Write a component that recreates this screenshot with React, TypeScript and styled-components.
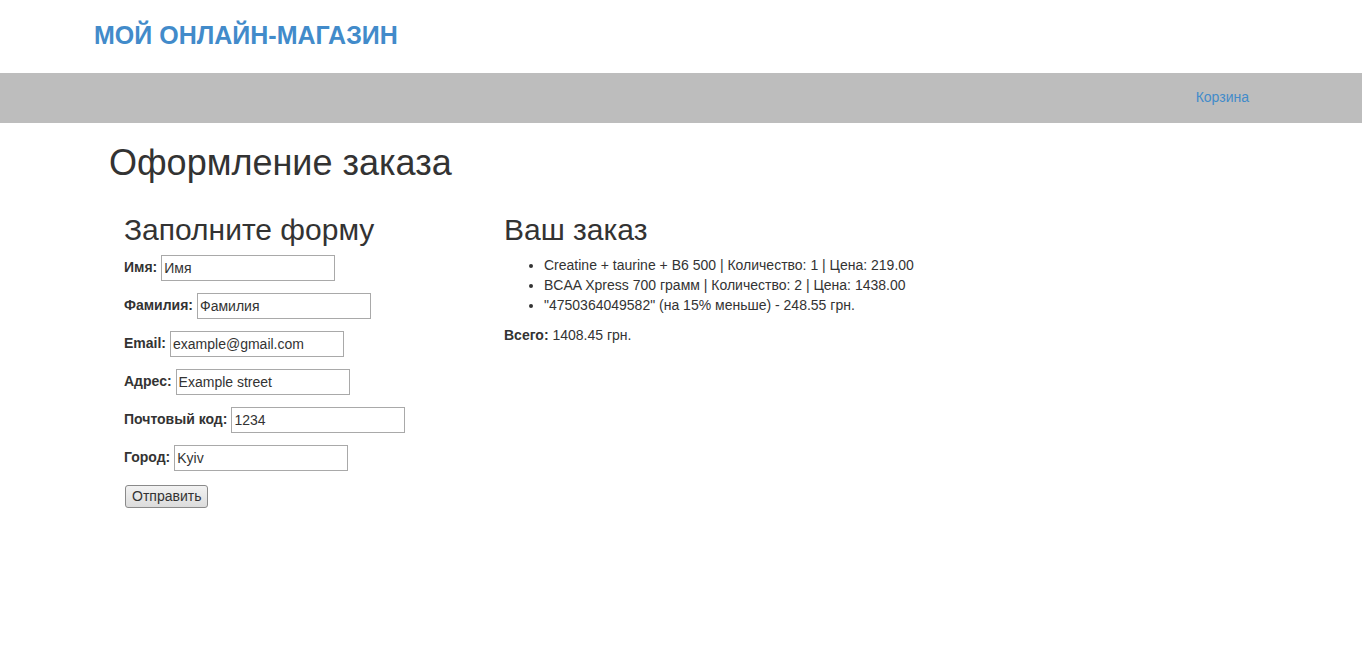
import React from "react";
import styled, { createGlobalStyle } from "styled-components";

const Global = createGlobalStyle`
  html, body { margin: 0; padding: 0; background: #fff; }
  body {
    font-family: "Liberation Sans", Arial, sans-serif;
    font-size: 14px;
    line-height: 1.42857;
    color: #333;
  }
  * { box-sizing: border-box; }
`;

const Header = styled.header`
  height: 73px;
  display: flex;
  align-items: center;
  padding-left: 94px;
`;

const Brand = styled.div`
  font-size: 25px;
  font-weight: 700;
  color: #428bca;
  line-height: 1;
  margin-top: -2px;
`;

const NavBar = styled.nav`
  height: 50px;
  background: #bdbdbd;
  display: flex;
  align-items: center;
  justify-content: flex-end;
  padding-right: 113px;
`;

const NavLink = styled.a`
  color: #428bca;
  font-size: 14px;
  text-decoration: none;
`;

const Main = styled.main`
  padding-left: 109px;
`;

const Title = styled.h1`
  font-size: 36px;
  font-weight: 500;
  line-height: 1.1;
  margin: 20px 0 10px;
`;

const Columns = styled.div`
  display: grid;
  grid-template-columns: 380px 1fr;
  padding-left: 15px;
`;

const SubTitle = styled.h2`
  font-size: 30px;
  font-weight: 500;
  line-height: 1.1;
  margin: 20px 0 10px;
`;

const FormGrid = styled.form`
  display: flex;
  flex-direction: column;
  align-items: flex-start;
  gap: 12px;
  margin-top: -1px;
`;

const Row = styled.div`
  display: flex;
  align-items: center;
  height: 26px;
  gap: 4px;
`;

const Label = styled.label`
  font-weight: 700;
`;

const Input = styled.input`
  width: 174px;
  height: 26px;
  border: 1px solid #a9a9a9;
  padding: 1px 2px;
  font-family: "Liberation Sans", Arial, sans-serif;
  font-size: 14px;
  color: #333;
  background: #fff;
  outline: none;
`;

const Button = styled.button`
  margin: 2px 0 0 1px;
  height: 23px;
  width: 83px;
  padding: 0 6px;
  border: 1px solid #8a8a8a;
  border-radius: 3px;
  background: linear-gradient(#f2f2f2, #dcdcdc);
  font-family: "Liberation Sans", Arial, sans-serif;
  font-size: 14px;
  color: #333;
`;

const List = styled.ul`
  margin: 0 0 10px;
  padding-left: 40px;
`;

const Total = styled.p`
  margin: 0;
`;

const fields = [
  { label: "Имя:", value: "Имя" },
  { label: "Фамилия:", value: "Фамилия" },
  { label: "Email:", value: "example@gmail.com" },
  { label: "Адрес:", value: "Example street" },
  { label: "Почтовый код:", value: "1234" },
  { label: "Город:", value: "Kyiv" },
];

const items = [
  "Creatine + taurine + B6 500 | Количество: 1 | Цена: 219.00",
  "BCAA Xpress 700 грамм | Количество: 2 | Цена: 1438.00",
  "\"4750364049582\" (на 15% меньше) - 248.55 грн.",
];

export default function App() {
  return (
    <>
      <Global />
      <Header>
        <Brand>МОЙ ОНЛАЙН-МАГАЗИН</Brand>
      </Header>
      <NavBar>
        <NavLink href="#">Корзина</NavLink>
      </NavBar>
      <Main>
        <Title>Оформление заказа</Title>
        <Columns>
          <div>
            <SubTitle>Заполните форму</SubTitle>
            <FormGrid onSubmit={(e) => e.preventDefault()}>
              {fields.map((f) => (
                <Row key={f.label}>
                  <Label>{f.label}</Label>
                  <Input defaultValue={f.value} />
                </Row>
              ))}
              <Button type="submit">Отправить</Button>
            </FormGrid>
          </div>
          <div>
            <SubTitle>Ваш заказ</SubTitle>
            <List>
              {items.map((it) => (
                <li key={it}>{it}</li>
              ))}
            </List>
            <Total>
              <b>Всего:</b> 1408.45 грн.
            </Total>
          </div>
        </Columns>
      </Main>
    </>
  );
}
